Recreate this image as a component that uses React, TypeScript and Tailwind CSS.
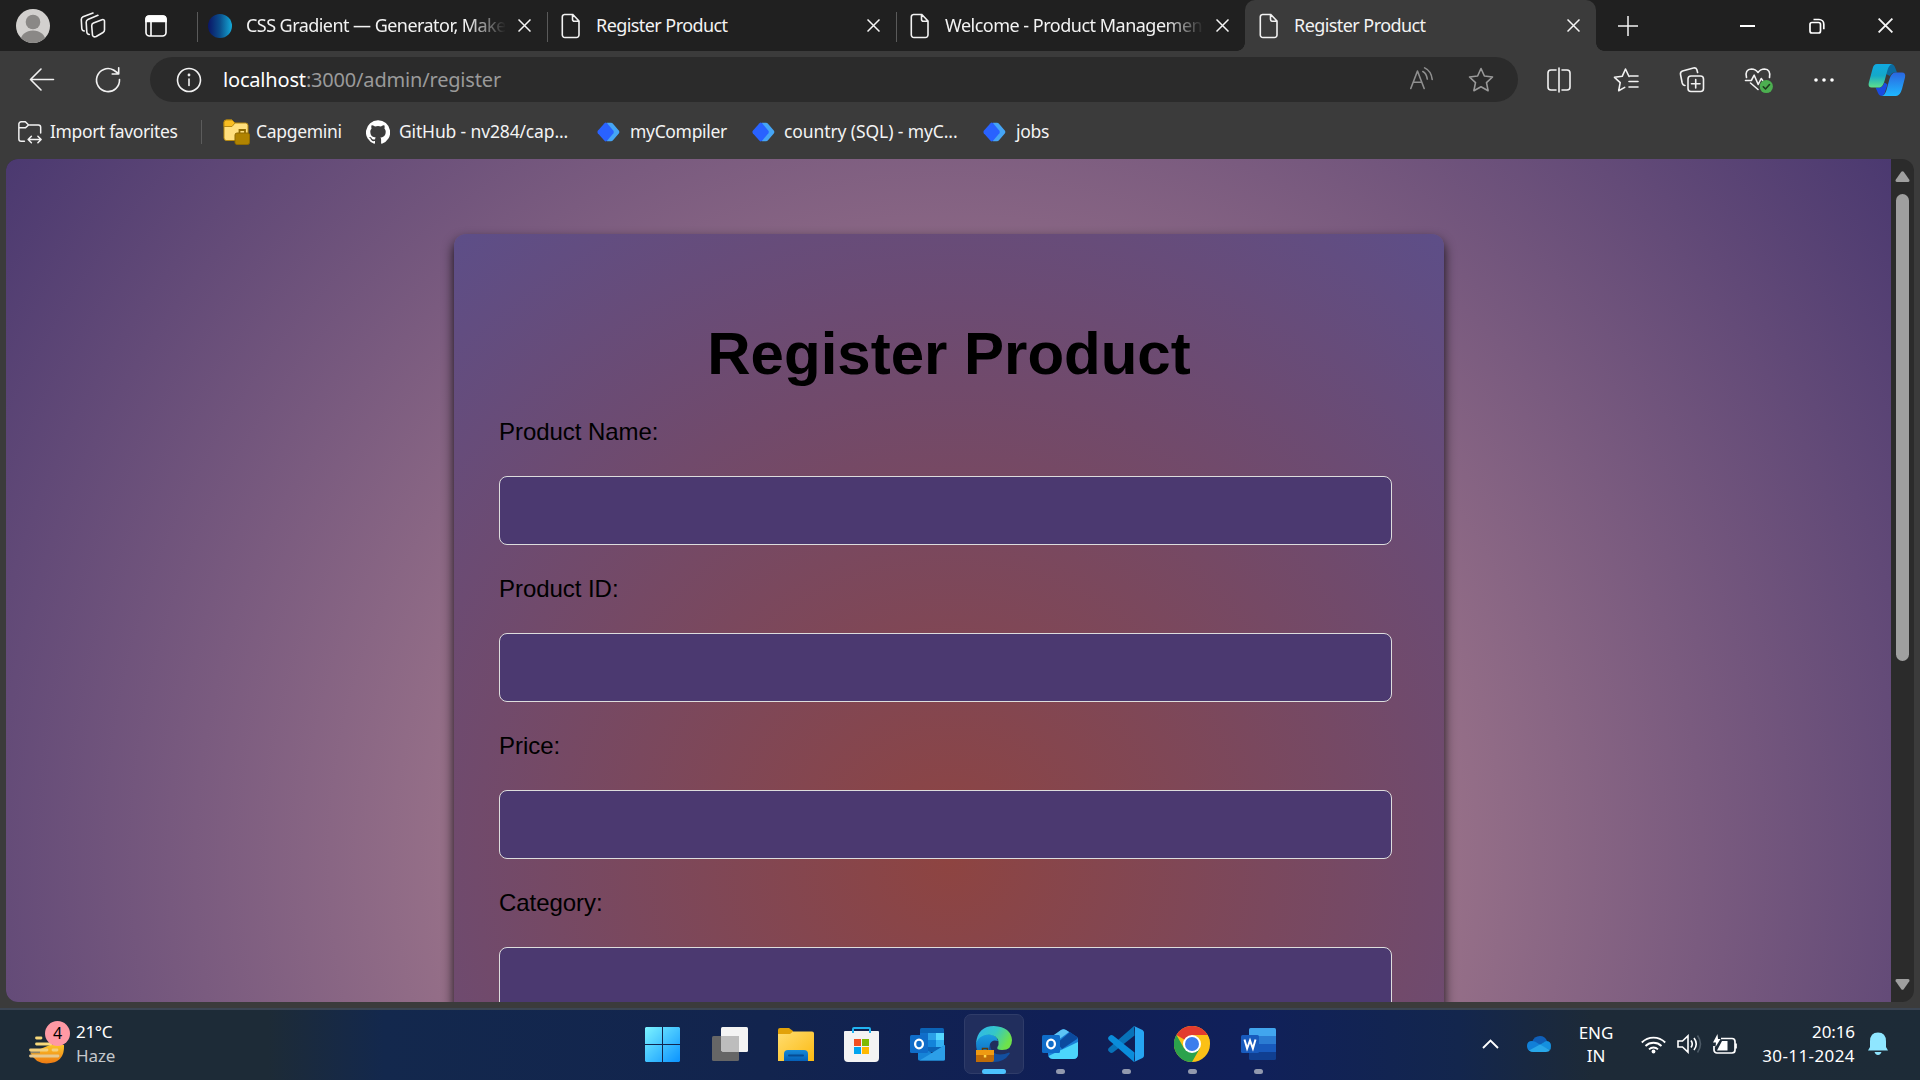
import React from "react";

const Doc = () => (
  <svg width="20" height="26" viewBox="0 0 20 26" fill="none" stroke="#f2f2f2" strokeWidth="1.6" className="shrink-0">
    <path d="M3.500 1.500h8.300L18 8v13.800a2.600 2.600 0 0 1-2.600 2.700H3.900a2.600 2.600 0 0 1-2.600-2.700V4.100a2.600 2.600 0 0 1 2.200-2.600zM11.500 1.800v4.400a2 2 0 0 0 2 2H18" />
  </svg>
);

const Cross = ({ s = 13, w = 1.5 }: { s?: number; w?: number }) => (
  <svg width={s} height={s} viewBox="0 0 13 13" stroke="#f5f5f5" strokeWidth={w} className="shrink-0">
    <path d="M.5.5l12 12M12.5.5l-12 12" />
  </svg>
);

type TabProps = { title: string; width: string; fade?: boolean; tracking: string; favicon?: boolean; active?: boolean };

const Tab = ({ title, width, fade, tracking, favicon, active }: TabProps) => (
  <div className={`relative flex h-[51px] items-center ${favicon ? "pr-[16px] pl-[13px]" : "pr-[16px] pl-[14px]"} ${width} ${active ? "rounded-t-[10px] bg-[#3b3b3b]" : ""}`}>
    {!active && <div className="absolute top-[12px] left-0 h-[30px] w-px bg-[#5a5a5a]" />}
    {active && (
      <>
        <div className="absolute bottom-0 -left-[8px] size-[8px] bg-[radial-gradient(circle_at_0_0,#202020_7.5px,#3b3b3b_8px)]" />
        <div className="absolute -right-[8px] bottom-0 size-[8px] bg-[radial-gradient(circle_at_100%_0,#202020_7.5px,#3b3b3b_8px)]" />
      </>
    )}
    {favicon ? <div className="-ml-[2px] size-[24px] rounded-full bg-[linear-gradient(90deg,#0b1566,#0b4f8c_50%,#14a9d8)]" /> : <Doc />}
    <div className={`flex-1 overflow-hidden text-[18px] whitespace-nowrap text-[#f3f3f3] ${favicon ? "ml-[14px]" : "ml-[15px]"} ${tracking} ${fade ? "[mask-image:linear-gradient(90deg,#000_85%,transparent_100%)]" : ""}`}>{title}</div>
    <div className="ml-[12px]"><Cross /></div>
  </div>
);

const Diamond = () => (
  <svg width="23" height="20" viewBox="0 0 23 20">
    <path d="M10 .8h4q1.300 0 2 1l6 7q.8 1.200 0 2.400l-6 7q-.7 1-2 1h-4z" fill="#45a5f5" />
    <path d="M7.500 1.200q1.300-1.200 2.600 0l6.300 7.600q.8 1.200 0 2.400l-6.300 7.600q-1.300 1.200-2.600 0L.8 11.200q-.8-1.200 0-2.400z" fill="#2962ff" />
  </svg>
);

const Fav = ({ w, icon, label, tracking, gap }: { w: string; icon: React.ReactNode; label: string; tracking: string; gap: string }) => (
  <div className={`flex shrink-0 items-center text-[17.5px] whitespace-nowrap text-[#f3f3f3] ${w} ${gap} ${tracking}`}>
    {icon}
    <span>{label}</span>
  </div>
);

const Slot = ({ children, w }: { children: React.ReactNode; w: string }) => (
  <div className={`flex shrink-0 items-center justify-center ${w}`}>{children}</div>
);

const G = ({ children, size = 28, color = "#f2f2f2", w = 1.6 }: { children: React.ReactNode; size?: number; color?: string; w?: number }) => (
  <svg width={size} height={size} viewBox="0 0 28 28" fill="none" stroke={color} strokeWidth={w} strokeLinecap="round" strokeLinejoin="round">
    {children}
  </svg>
);

const TabStrip = () => (
  <div className="flex h-[51px] shrink-0 items-center bg-[#202020]">
    <Slot w="w-[66px]">
      <svg width="34" height="34" viewBox="0 0 34 34">
        <clipPath id="av"><circle cx="17" cy="17" r="17" /></clipPath>
        <g clipPath="url(#av)">
          <rect width="34" height="34" fill="#d2d0ce" />
          <circle cx="17" cy="13" r="7.300" fill="#8a8886" />
          <ellipse cx="17" cy="32" rx="12.500" ry="10.500" fill="#8a8886" />
        </g>
      </svg>
    </Slot>
    <Slot w="w-[54px]">
      <G>
        <path d="M14.500 11l8.500-3.300q2.500-.6 2.500 1.600v8.700q0 1.600-1.500 2.500l-6.800 4q-2.700 1.200-3.700-1.200l-.8-9.600q0-1.900 1.800-2.700zM10.300 22.500q-2.300-.3-2.500-2.500L7.200 10.300q0-2 1.700-2.800l10-4.200M5.300 19q-2.300-.2-2.500-2.500l-.5-9q0-2 1.700-2.800L14 1" />
      </G>
    </Slot>
    <Slot w="w-[72px]">
      <svg width="22" height="22" viewBox="0 0 22 22" fill="none" stroke="#fff" strokeWidth="1.600">
        <rect x="1" y="1" width="20" height="20" rx="3.500" />
        <path d="M1 4a3 3 0 0 1 3-3h14a3 3 0 0 1 3 3v2.500H1z" fill="#fff" />
        <path d="M6 6v15" />
      </svg>
    </Slot>
    <div className="flex pl-[5px]">
      <Tab width="w-[350px]" title="CSS Gradient — Generator, Maker" fade favicon tracking="tracking-[-0.55px]" />
      <Tab width="w-[349px]" title="Register Product" tracking="tracking-[-0.57px]" />
      <Tab width="w-[349px]" title="Welcome - Product Management" fade tracking="tracking-[-0.5px]" />
      <Tab width="w-[351px]" title="Register Product" active tracking="tracking-[-0.57px]" />
    </div>
    <Slot w="w-[64px]">
      <svg width="20" height="20" viewBox="0 0 20 20" stroke="#f2f2f2" strokeWidth="1.500"><path d="M10 0v20M0 10h20" /></svg>
    </Slot>
    <div className="flex-1" />
    <Slot w="w-[69px]"><div className="h-[2px] w-[15px] bg-white" /></Slot>
    <Slot w="w-[69px]">
      <svg width="16" height="16" viewBox="0 0 16 16" fill="none" stroke="#fff" strokeWidth="1.700">
        <rect x="1" y="4.500" width="10.500" height="10.500" rx="2" />
        <path d="M4.500 1.500H10a4.800 4.800 0 0 1 4.800 4.800v5" />
      </svg>
    </Slot>
    <Slot w="w-[69px]"><Cross s={15} w={1.6} /></Slot>
  </div>
);

const Toolbar = () => (
  <div className="flex h-[57px] shrink-0 items-center">
    <Slot w="w-[84px]"><G size={28}><path d="M25.500 13.500H2.500M13 3L2.500 13.500L13 24" /></G></Slot>
    <Slot w="w-[48px]"><G size={28}><path d="M25.500 13.500A11.500 11.500 0 1 1 19.500 4L24.500 7.500M24.700 1.800V8h-6.500" /></G></Slot>
    <div className="ml-[18px] flex h-[45px] w-[1368px] items-center rounded-full bg-[#2b2b2b]">
      <Slot w="w-[78px]">
        <G size={28}><circle cx="14" cy="14" r="11.500" /><path d="M14 13v6.500" /><circle cx="14" cy="9" r=".6" fill="#fff" /></G>
      </Slot>
      <div className="-ml-[5px] flex-1 text-[20px] tracking-[-0.18px] whitespace-nowrap text-[#9a9a9a]">
        <span className="text-white">localhost</span>:3000/admin/register
      </div>
      <Slot w="w-[60px]">
        <G size={25} color="#8f8f8f" w={1.8}><path d="M2 24L9.500 4.500L17 24M4.800 17h9.500M15.500 5q4 2 5 8.500M17.500 1q7.500 3.500 8.500 13" /></G>
      </Slot>
      <Slot w="w-[59px]">
        <G size={28} color="#9a9a9a"><path d="M14 2.500l3.400 7.500 8.100 1-6 5.600 1.600 8.100-7.100-4-7.100 4 1.600-8.100-6-5.600 8.100-1z" /></G>
      </Slot>
      <div className="w-[8px]" />
    </div>
    <div className="ml-[8px] flex">
      <Slot w="w-[66px]"><G><path d="M11 4H6a3 3 0 0 0-3 3v14a3 3 0 0 0 3 3h5M17 4h5a3 3 0 0 1 3 3v14a3 3 0 0 1-3 3h-5M14 2v24" /></G></Slot>
      <Slot w="w-[67px]"><G><path d="M17 10.500L13.500 3l-3.300 7.300-7.700 1 5.700 5.400-1.500 8 6-3.300M18 10h8M17 15.500h9M17 21h9" /></G></Slot>
      <Slot w="w-[66px]"><G><rect x="10" y="10" width="15.500" height="15.500" rx="3" /><path d="M17.700 13.500v8.500M13.500 17.700H22M7 19.500q-2 0-2.800-2.500L2.500 8.500Q2 6 4.500 5l11-3q2.500-.5 3.300 1.500l.8 3" /></G></Slot>
      <Slot w="w-[66px]">
        <svg width="32" height="32" viewBox="0 0 32 32" fill="none" stroke="#f2f2f2" strokeWidth="1.600" strokeLinejoin="round" strokeLinecap="round">
          <path d="M4.500 13.500Q2.500 5.500 9.500 5q4 0 6.500 3.500Q18.500 5 22.500 5q6.500.5 5 8.500M3.500 16.500h5.800l2.900-5.300 4 9.300 3-6 1.500 2M8.500 19l7.500 6.500" />
          <circle cx="24.300" cy="22.500" r="6.600" fill="#4caf50" stroke="none" />
          <path d="M21.300 22.800l2.200 2.200 4-4.500" stroke="#1d3b1e" />
        </svg>
      </Slot>
      <Slot w="w-[66px]"><svg width="20" height="4" fill="#fff"><circle cx="2" cy="2" r="1.800" /><circle cx="10" cy="2" r="1.800" /><circle cx="18" cy="2" r="1.800" /></svg></Slot>
      <Slot w="w-[60px]">
        <svg width="38" height="34" viewBox="0 0 38 34">
          <defs>
            <linearGradient id="cp1" x1="0" y1="0" x2="0" y2="1"><stop offset="0" stopColor="#10a8e0" /><stop offset=".5" stopColor="#14a9c9" /><stop offset="1" stopColor="#5fe08a" /></linearGradient>
            <linearGradient id="cp2" x1="0" y1="0" x2="0" y2="1"><stop offset="0" stopColor="#2a66e0" /><stop offset="1" stopColor="#1fb8ff" /></linearGradient>
          </defs>
          <path d="M19 1h4q3 0 4.300 4l1.700 4.500h-2.500q-3 0-4.500 3.500l-4-2z" fill="#0c6a9e" />
          <path d="M7.500 24.500h4q3 0 5-5l3 2-3 9-2 2.500Q11 33 10 30z" fill="#1a4be0" />
          <path d="M9 1h15q-3 1-4.500 6l-3 11q-2 6.500-5 6.500H3.500Q-.5 24.500 1 19L4.500 6Q5.500 1 9 1z" fill="url(#cp1)" />
          <path d="M27 9.500h7q4 0 3 5L34 26q-2 7-6 7H14q3-1 4.500-6l3-11q2-6.500 5.500-6.500z" fill="url(#cp2)" />
        </svg>
      </Slot>
    </div>
  </div>
);

const Favorites = () => (
  <div className="flex h-[51px] shrink-0 items-center pb-[4px] pl-[17px]">
    <Fav w="w-[184px]" gap="gap-[7px]" tracking="tracking-[-0.37px]" label="Import favorites" icon={
      <G size={26}><path d="M8 24H4.500A2.500 2.500 0 0 1 2 21.500V5.500A2.500 2.500 0 0 1 4.500 3H9l3.500 3.500H23a2.500 2.500 0 0 1 2.500 2.500v6M2 9.500h7l3.500-3M12.500 22h13M15.500 18.500L12 22l3.500 3.500M22.500 18.500L26 22l-3.500 3.500" /></G>
    } />
    <div className="mr-[21px] h-[24px] w-px bg-[#5c5c5c]" />
    <Fav w="w-[143px]" gap="gap-[6px]" tracking="tracking-[-0.3px]" label="Capgemini" icon={
      <svg width="27" height="27" viewBox="0 0 27 27" stroke="#b88a10">
        <path d="M1 4.500A2.500 2.500 0 0 1 3.500 2H9l3 3h10.500A2.500 2.500 0 0 1 25 7.500V20a2.500 2.500 0 0 1-2.500 2.500h-19A2.500 2.500 0 0 1 1 20z" fill="#ffdf7d" />
        <path d="M1 8.500h8L12 5 9 2H3.500A2.500 2.500 0 0 0 1 4.500z" fill="#f9bd21" />
        <rect x="12" y="15" width="14.500" height="11.500" rx="2" fill="#b08300" stroke="#8f6a00" />
        <path d="M16.500 15v-3h5.500v3" fill="none" stroke="#8f6a00" strokeWidth="1.800" />
      </svg>
    } />
    <Fav w="w-[231px]" gap="gap-[9px]" tracking="tracking-[-0.15px]" label="GitHub - nv284/cap..." icon={
      <svg width="24" height="24" viewBox="0 0 24 24" fill="#fff"><path d="M12 .3a12 12 0 0 0-3.800 23.400c.6.100.8-.3.800-.6v-2c-3.300.7-4-1.600-4-1.600-.6-1.400-1.400-1.800-1.400-1.800-1-.7.100-.7.100-.7 1.200 0 1.900 1.200 1.900 1.200 1 1.800 2.800 1.300 3.500 1 0-.8.400-1.300.7-1.600-2.700-.3-5.500-1.300-5.500-6 0-1.200.5-2.300 1.300-3.100-.2-.4-.6-1.600 0-3.200 0 0 1-.3 3.400 1.200a11.500 11.500 0 0 1 6 0c2.300-1.500 3.300-1.200 3.300-1.200.7 1.600.2 2.800.1 3.200.8.800 1.300 1.900 1.300 3.200 0 4.600-2.800 5.600-5.500 5.900.5.400.9 1 .9 2.200v3.300c0 .3.100.7.800.6A12 12 0 0 0 12 .3" /></svg>
    } />
    <Fav w="w-[155px]" gap="gap-[10px]" tracking="tracking-[-0.33px]" label="myCompiler" icon={<Diamond />} />
    <Fav w="w-[231px]" gap="gap-[9px]" tracking="tracking-[-0.1px]" label="country (SQL) - myC..." icon={<Diamond />} />
    <Fav w="w-[100px]" gap="gap-[10px]" tracking="tracking-[-0.3px]" label="jobs" icon={<Diamond />} />
  </div>
);

const Field = ({ label }: { label: string }) => (
  <div className="h-[157px]">
    <label className="block h-[58px] text-[24px] leading-[28px] tracking-[-0.05px] text-black">{label}</label>
    <div className="h-[69px] w-[893px] rounded-[8px] border border-[#dddddd] bg-[#4b3970]" />
  </div>
);

const Page = () => (
  <div className="mr-[6px] ml-[6px] flex h-[843px] shrink-0 overflow-hidden rounded-[12px] bg-[#2b2b2b]">
    <div className="h-full w-[1885px] overflow-hidden">
      <div className="h-[1402px] bg-[radial-gradient(circle,#ce989a_0%,#4b3970_100%)] pt-[75px]">
        <div className="ml-[448px] h-[1252px] w-[990px] rounded-[12px] bg-[radial-gradient(circle,#8e4441_0%,#5d4e88_100%)] px-[45px] pt-[82px] font-['Liberation_Sans',sans-serif] shadow-[0_6px_12px_rgba(0,0,0,0.85)]">
          <h1 className="mb-[26px] text-center text-[60px] leading-[76px] font-bold text-black">Register Product</h1>
          <div className="flex flex-col">
            <Field label="Product Name:" />
            <Field label="Product ID:" />
            <Field label="Price:" />
            <Field label="Category:" />
          </div>
        </div>
      </div>
    </div>
    <div className="flex w-[23px] flex-col items-center pt-[12px] pb-[12px]">
      <svg width="15" height="11" viewBox="0 0 15 11" fill="#9f9f9f"><path d="M6.300.8q1.200-1.300 2.400 0l5.600 8q.8 2.200-1.500 2.200H2.200Q-.1 11 .7 8.800z" /></svg>
      <div className="mt-[12px] h-[467px] w-[13px] rounded-full bg-[#9f9f9f]" />
      <div className="flex-1" />
      <svg width="15" height="11" viewBox="0 0 15 11" fill="#9f9f9f"><path d="M6.300 10.200q1.200 1.300 2.400 0l5.600-8Q15.100 0 12.800 0H2.200Q-.1 0 .7 2.200z" /></svg>
    </div>
  </div>
);

const TaskIcon = ({ children, run, w = "w-[66px]" }: { children: React.ReactNode; run?: boolean; w?: string }) => (
  <div className={`relative flex h-[60px] items-center justify-center ${w}`}>
    {children}
    {run && <div className="absolute bottom-0 left-[28.5px] h-[5px] w-[9px] rounded-full bg-[#9299ae]" />}
  </div>
);

const Taskbar = () => (
  <div className="relative flex h-[72px] shrink-0 items-center border-t-2 border-[#3b4553] bg-[linear-gradient(90deg,#1d2b37_0%,#1d2b37_14%,#13284d_20%,#12244e_40%,#101f56_55%,#10205a_65%,#13264d_76%,#1d2a37_83%,#1d2b37_100%)] pb-[2px] text-[17px]">
    <div className="flex w-[632px] items-center pl-[28px]">
      <div className="relative h-[44px] w-[42px]">
        <svg width="42" height="44" viewBox="0 0 42 44">
          <defs><linearGradient id="sun" x1="0" y1="0" x2="0" y2="1"><stop offset="0" stopColor="#fbc52b" /><stop offset="1" stopColor="#ee7a12" /></linearGradient></defs>
          <path d="M36 23q1 18-17.500 18.500Q7 41 2.500 31L22 23z" fill="url(#sun)" />
          <path d="M2.500 30H12" stroke="#8f8468" strokeWidth="2.500" />
          <g strokeLinecap="round" strokeWidth="2.800">
            <path d="M8.500 16H13M8.500 22H23" stroke="#f8d97b" />
            <path d="M2.500 28H19M25 28h4" stroke="#f3d07c" />
            <path d="M2.500 34H30" stroke="#e6c88e" />
          </g>
        </svg>
        <div className="absolute -top-px left-[17px] flex size-[25px] items-center justify-center rounded-full bg-[#ff99a4] pb-px text-[16px] text-black">4</div>
      </div>
      <div className="ml-[6px] leading-[24px] tracking-[-0.3px]">
        <div className="text-white">21°C</div>
        <div className="tracking-[-0.1px] text-[#c3c7cb]">Haze</div>
      </div>
    </div>
    <div className="-ml-[3px] flex">
      <TaskIcon w="w-[67px]">
        <svg width="35" height="35" viewBox="0 0 35 35">
          <defs><linearGradient id="win" x1="0" y1="0" x2="1" y2="1"><stop offset="0" stopColor="#7cf3ff" /><stop offset="1" stopColor="#0a93ff" /></linearGradient></defs>
          <path d="M1 0h16v17H0V1zM18 0h16l1 1v16H18zM0 18h17v17H1l-1-1zM18 18h17v16l-1 1H18z" fill="url(#win)" />
        </svg>
      </TaskIcon>
      <TaskIcon w="w-[67px]">
        <svg width="36" height="34" viewBox="0 0 36 34">
          <rect x="9" y="0" width="27" height="25" rx="1.500" fill="#f4f4f4" />
          <rect x="0" y="9" width="27" height="25" rx="1.500" fill="#666" />
          <path d="M9 9h18v16H10.500L9 23.500z" fill="#bdbdbd" />
        </svg>
      </TaskIcon>
      <TaskIcon>
        <svg width="36" height="33" viewBox="0 0 36 33">
          <defs>
            <linearGradient id="fo" x1="0" y1="0" x2="1" y2="1"><stop offset="0" stopColor="#ffdd70" /><stop offset="1" stopColor="#fcba12" /></linearGradient>
            <linearGradient id="fb" x1="0" y1="0" x2="0" y2="1"><stop offset="0" stopColor="#1689d8" /><stop offset="1" stopColor="#0560b8" /></linearGradient>
          </defs>
          <path d="M0 2Q0 0 2 0h9l4 3v5H0z" fill="#e2a209" />
          <path d="M0 6h12l3-2.500h19q2 0 2 2V33H0z" fill="url(#fo)" />
          <path d="M6 33v-7q0-4 4-4h16q4 0 4 4v7z" fill="url(#fb)" />
          <path d="M11 27.500h14" stroke="#064c94" strokeWidth="2" strokeLinecap="round" />
        </svg>
      </TaskIcon>
      <TaskIcon w="w-[65px]">
        <svg width="35" height="35" viewBox="0 0 35 35">
          <path d="M0 5q0-1 1-1h33q1 0 1 1v26q0 4-4 4H4q-4 0-4-4z" fill="#f3f3f3" />
          <path d="M9 6V2q0-1 1-1h15q1 0 1 1v4" fill="none" stroke="#22b4f2" strokeWidth="2" />
          <path d="M10 12h7v7h-7z" fill="#f25022" /><path d="M18 12h7v7h-7z" fill="#7fba00" />
          <path d="M10 20h7v7h-7z" fill="#00a4ef" /><path d="M18 20h7v7h-7z" fill="#ffb900" />
        </svg>
      </TaskIcon>
      <TaskIcon w="w-[67px]">
        <svg width="35" height="33" viewBox="0 0 35 33">
          <rect x="10" y="0" width="24" height="24" rx="1.500" fill="#0b63b6" />
          <path d="M10 5h8v7h-8z" fill="#0f6fca" /><path d="M18 5h8v7h-8z" fill="#2aa0e8" /><path d="M26 5h8v7h-8z" fill="#55d8ff" />
          <path d="M18 12h8v7h-8z" fill="#1384da" /><path d="M26 12h8v7h-8z" fill="#34b2f3" />
          <path d="M8 17l14 8 13-8v14q0 1.500-1.500 1.500h-24Q8 32.500 8 31z" fill="#1583d7" />
          <path d="M35 17v14q0 1.500-1.500 1.500h-24L35 17z" fill="#2c9fe8" />
          <rect x="0" y="7" width="18" height="18" rx="1.500" fill="#0f6cc9" />
          <ellipse cx="9" cy="16" rx="3.900" ry="4.300" fill="none" stroke="#fff" strokeWidth="2.300" />
        </svg>
      </TaskIcon>
      <TaskIcon>
        <div className="flex h-[60px] w-[60px] items-center justify-center rounded-[7px] border border-[#2f3c69] bg-[#212e5d]">
          <svg width="36" height="36" viewBox="0 0 36 36">
            <defs>
              <linearGradient id="e1" x1="0" y1="0" x2="1" y2=".4"><stop offset="0" stopColor="#2fb4f0" /><stop offset=".55" stopColor="#35c7c7" /><stop offset="1" stopColor="#6ee24a" /></linearGradient>
              <linearGradient id="e2" x1="0" y1="0" x2="0" y2="1"><stop offset="0" stopColor="#1b9de2" /><stop offset="1" stopColor="#0c5fb4" /></linearGradient>
            </defs>
            <path d="M0 17Q2 8 12 8q9 1 10 7-6-2-8 3-2 10 4 18Q0 36 0 17z" fill="url(#e2)" />
            <path d="M14 18q0 10 10 10.500 5 0 9-2 1.500 0 .5 1.500Q28 36 18 36q-7-8-4-18z" fill="#134f9f" />
            <path d="M0 17Q2 0 18 0q17 1 18 14 0 10-10 10-6 0-4.500-3 1.500-2 1-5.500Q21 9 12.500 8.500 3 9 0 17z" fill="url(#e1)" />
            <path d="M0 25q0-1 1-1h16q1 0 1 1v9q0 2-2 2H0z" fill="#c06c08" />
            <path d="M0 24h18v5H0z" fill="#ef9a12" />
            <path d="M6.500 24v-1.500h5V24" stroke="#5c3a08" strokeWidth="1.500" fill="none" />
            <rect x="7.800" y="29" width="2.500" height="2.500" fill="#ffd84a" />
          </svg>
        </div>
        <div className="absolute bottom-0 left-[21px] h-[5px] w-[24px] rounded-full bg-[#4cc2ff]" />
      </TaskIcon>
      <TaskIcon run>
        <svg width="36" height="30" viewBox="0 0 36 30">
          <path d="M6 12L19 1q2.500-1.500 5 0l11 7q1 .8 1 2v15q0 5-5 5H11q-5 0-5-5z" fill="#1a7fd6" />
          <path d="M6 10L19 1q2.500-1.500 5 0l3 2L12 14z" fill="#5cc4f5" />
          <path d="M15 14L28 3l7 5q1 1 0 2L20 20z" fill="#0b4a9e" />
          <path d="M36 13v12q0 5-5 5H11q-3 0-4.500-3z" fill="#4cd5fb" />
          <rect x="0" y="6" width="18" height="18" rx="1.500" fill="#0f6cc9" />
          <ellipse cx="9" cy="15" rx="3.900" ry="4.300" fill="none" stroke="#fff" strokeWidth="2.300" />
        </svg>
      </TaskIcon>
      <TaskIcon run>
        <svg width="36" height="36" viewBox="0 0 36 36">
          <path d="M26 0L26.500 9.500 5 26.500Q3 27.500 1.500 26L.5 25q-1-1.500.3-3z" fill="#0872b8" />
          <path d="M26 36l.5-9.500L5 9.500Q3 8.500 1.500 10L.5 11q-1 1.500.3 3z" fill="#0a8ddb" />
          <path d="M26 0l8.500 4q1.500 1 1.500 2.500v23q0 1.500-1.500 2.500L26 36q1-1 1-2.500v-31Q27 1 26 0z" fill="#26a5f2" />
        </svg>
      </TaskIcon>
      <TaskIcon run>
        <svg width="36" height="36" viewBox="0 0 36 36">
          <circle cx="18" cy="18" r="18" fill="#fbc116" />
          <path d="M18 18L2.400 9A18 18 0 0 1 33.600 9z" fill="#e33b2e" />
          <path d="M18 9h15.600q2.400 4 2.400 9L26 22z" fill="#fbc116" />
          <path d="M2.400 9A18 18 0 0 0 18 36l7.800-13.500L18 18l-7.800 4.500z" fill="#2ba24c" />
          <circle cx="18" cy="18" r="9" fill="#fff" /><circle cx="18" cy="18" r="7" fill="#3b7ded" />
        </svg>
      </TaskIcon>
      <TaskIcon run>
        <svg width="35" height="32" viewBox="0 0 35 32">
          <path d="M8 1.500Q8 0 9.500 0h24Q35 0 35 1.500V8H8z" fill="#41a5ee" /><path d="M8 8h27v8H8z" fill="#2b7cd3" />
          <path d="M8 16h27v8H8z" fill="#185abd" /><path d="M8 24h27v6.500q0 1.500-1.500 1.500h-24Q8 32 8 30.500z" fill="#103f91" />
          <rect x="0" y="7" width="18" height="18" rx="1.500" fill="#185abd" />
          <path d="M3.500 11.500l2.600 9L9 12.500l2.900 8 2.600-9" fill="none" stroke="#fff" strokeWidth="2" />
        </svg>
      </TaskIcon>
    </div>
    <div className="flex-1" />
    <div className="flex items-center pr-[32px] text-white">
      <svg width="17" height="10" viewBox="0 0 17 10" fill="none" stroke="#fff" strokeWidth="1.900"><path d="M1 9l7.500-7.500L16 9" /></svg>
      <svg width="24" height="16" viewBox="0 0 24 16" className="ml-[28px]">
        <path d="M5 6q2-6 8-6 5 0 7 5l-8 4z" fill="#0f5fb8" />
        <path d="M0 10q0-5 5-5 3 0 7 3l4 3-8 4.500H5Q0 15 0 10z" fill="#1180d8" />
        <path d="M12 9l7-4q5 0 5 5 0 3-1 4z" fill="#1490df" />
        <path d="M2 14.500L13 8.500l10 5.500q-1 2-4 2H6q-2 0-4-1.500z" fill="#28a8ea" />
      </svg>
      <div className="ml-[26px] w-[38px] text-center leading-[23px] tracking-[-0.1px]">ENG<br />IN</div>
      <svg width="25" height="19" viewBox="0 0 25 19" fill="none" stroke="#fff" strokeWidth="1.800" className="ml-[26px]">
        <path d="M.8 7.500a16.500 16.500 0 0 1 23.400 0M4.500 11a11.500 11.500 0 0 1 16 0M8 14.300a6.500 6.500 0 0 1 9 0" /><circle cx="12.500" cy="16.500" r="1.900" fill="#fff" stroke="none" />
      </svg>
      <svg width="25" height="20" viewBox="0 0 25 20" fill="none" stroke="#fff" strokeWidth="1.600" className="ml-[11px]">
        <path d="M1 7h4.500L11 1.800v16.400L5.500 13H1zM14 6.500q2.500 3.500 0 7M17 4q4.500 6 0 12" /><path d="M20.500 1.500q6 8.500 0 17" stroke="#4d5a66" />
      </svg>
      <svg width="25" height="21" viewBox="0 0 25 21" fill="none" stroke="#fff" strokeWidth="1.700" className="ml-[11px]">
        <path d="M8 4.500h11a3 3 0 0 1 3 3V16a3 3 0 0 1-3 3H4a3 3 0 0 1-3-3v-4M23 9.500v5" /><path d="M4 16.500L9 7h5.500v9.500zM4.500 0L0 8.500h3L2.500 13l5-8H5z" fill="#fff" stroke="none" />
      </svg>
      <div className="ml-[22px] w-[95px] text-right leading-[24px] whitespace-nowrap"><span className="tracking-[-0.1px]">20:16</span><br /><span className="tracking-[0.4px]">30-11-2024</span></div>
      <svg width="20" height="24" viewBox="0 0 20 24" fill="#8fe6ff" className="ml-[13px]"><path d="M2 15V9.500Q2 .5 10 .5t8 9V15l2 3.500H0zM6.500 20h7q-1 3-3.500 3t-3.500-3z" /></svg>
    </div>
  </div>
);

export default function App() {
  return (
    <div className="flex h-[1080px] w-[1920px] flex-col overflow-hidden bg-[#3b3b3b] font-['Noto_Sans','Open_Sans',sans-serif]">
      <TabStrip />
      <Toolbar />
      <Favorites />
      <Page />
      <div className="h-[6px] shrink-0" />
      <Taskbar />
    </div>
  );
}
